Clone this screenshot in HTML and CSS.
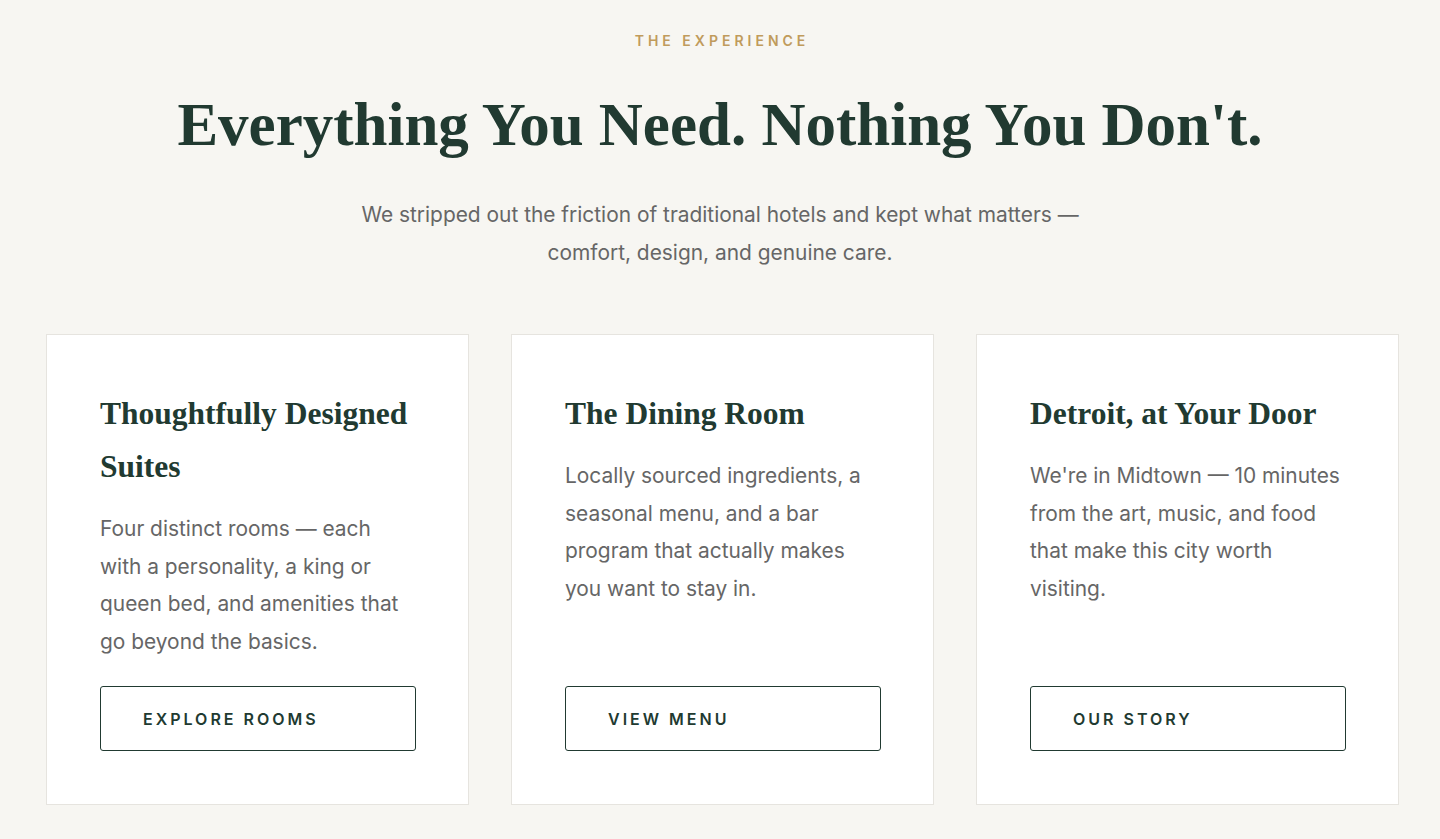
FILE: index.html
```html
<!DOCTYPE html>
<html lang="en">
<head>
    <meta charset="UTF-8">
    <title>The Experience</title>
    <link rel="stylesheet" href="styles.css">
</head>
<body>
    <section class="intro">
        <p class="eyebrow">The Experience</p>
        <h1>Everything You Need. Nothing You Don't.</h1>
        <p class="lead">We stripped out the friction of traditional hotels and kept what matters — comfort, design, and genuine care.</p>
    </section>

    <section class="cards">
        <div class="card">
            <h2>Thoughtfully Designed Suites</h2>
            <p>Four distinct rooms — each with a personality, a king or queen bed, and amenities that go beyond the basics.</p>
            <a class="btn" href="#">Explore Rooms</a>
        </div>
        <div class="card">
            <h2>The Dining Room</h2>
            <p>Locally sourced ingredients, a seasonal menu, and a bar program that actually makes you want to stay in.</p>
            <a class="btn" href="#">View Menu</a>
        </div>
        <div class="card">
            <h2>Detroit, at Your Door</h2>
            <p>We're in Midtown — 10 minutes from the art, music, and food that make this city worth visiting.</p>
            <a class="btn" href="#">Our Story</a>
        </div>
    </section>
</body>
</html>
```

FILE: styles.css
```css
body {
    margin: 0;
    padding: 31px 0 0;
    background-color: #f7f6f2;
    font-family: Inter, "Liberation Sans", sans-serif;
    color: #666;
}
.intro {
    text-align: center;
}
.eyebrow {
    margin: 0;
    padding-left: 4px;
    font-size: 14px;
    line-height: 20px;
    font-weight: 600;
    letter-spacing: 4px;
    text-transform: uppercase;
    color: #c09b5c;
}
h1 {
    margin: 35px 0 0;
    font-family: "Liberation Serif", serif;
    font-weight: 700;
    font-size: 61px;
    line-height: 77px;
    color: #213a31;
}
.lead {
    max-width: 760px;
    margin: 33px auto 0;
    font-size: 20.9px;
    line-height: 38px;
    color: #666;
}
.cards {
    display: grid;
    grid-template-columns: repeat(3, 423px);
    gap: 42px;
    padding: 0 0 0 46px;
    margin-top: 62px;
}
.card {
    display: flex;
    flex-direction: column;
    align-items: flex-start;
    background-color: #fff;
    border: 1px solid #e6e4df;
    padding: 52px 53px 53px;
}
h2 {
    margin: 0;
    font-family: "Liberation Serif", serif;
    font-weight: 700;
    font-size: 31.5px;
    line-height: 53px;
    color: #213a31;
}
.card p {
    margin: 17px 0 26px;
    font-size: 20.9px;
    line-height: 37.5px;
    color: #666;
}
.btn {
    margin-top: auto;
    box-sizing: border-box;
    width: 316px;
    height: 65px;
    padding: 0 42px;
    display: flex;
    align-items: center;
    border: 1.5px solid #213a31;
    border-radius: 3px;
    font-size: 16px;
    font-weight: 600;
    letter-spacing: 3px;
    text-transform: uppercase;
    text-decoration: none;
    color: #213a31;
}
```
